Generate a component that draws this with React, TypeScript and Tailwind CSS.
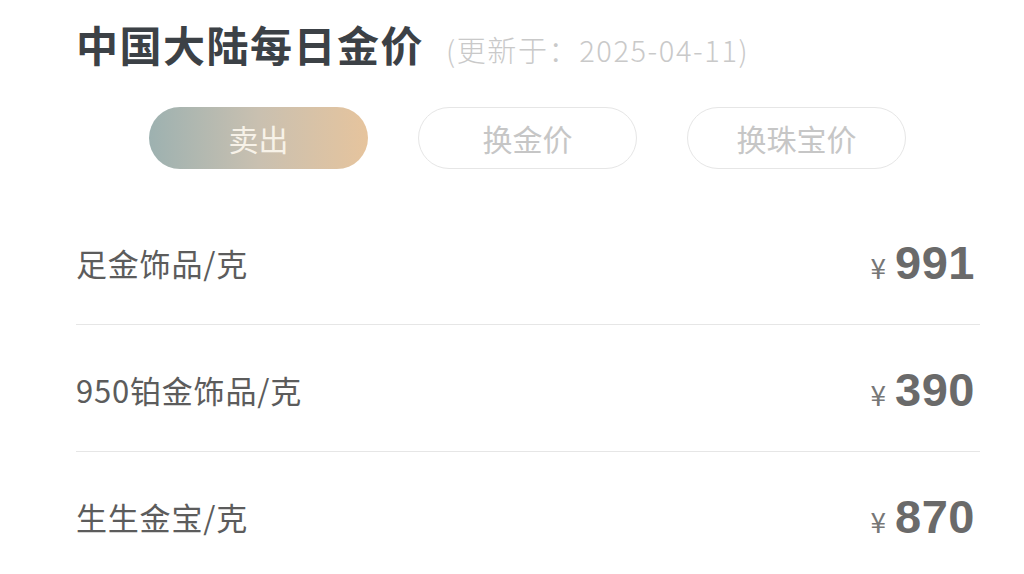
import { useState } from 'react';

const tabs = ['卖出', '换金价', '换珠宝价'];

const prices = [
  { name: '足金饰品/克', price: 991 },
  { name: '950铂金饰品/克', price: 390 },
  { name: '生生金宝/克', price: 870 },
];

export default function App() {
  const [active, setActive] = useState(0);

  return (
    <div
      className="h-[574px] w-[1024px] overflow-hidden bg-white"
      style={{ fontFamily: '"Noto Sans CJK SC", "Noto Sans", sans-serif' }}
    >
      <div className="pl-[76px] pr-[44px]">
        {/* Header */}
        <div className="flex items-baseline pt-[16px]">
          <h1 className="text-[42px] font-bold leading-[56px] tracking-[1.5px] text-[#3c4146]">
            中国大陆每日金价
          </h1>
          <span className="ml-[22px] text-[29px] font-light tracking-[1.6px] text-[#c9c9c9]">
            (更新于：2025-04-11)
          </span>
        </div>

        {/* Tabs */}
        <div className="mt-[35px] flex gap-[50px] pl-[73px]">
          {tabs.map((t, i) => (
            <button
              key={t}
              onClick={() => setActive(i)}
              className={
                i === active
                  ? 'h-[62px] w-[219px] rounded-full bg-gradient-to-r from-[#9db1b0] via-[#c9c0b0] to-[#e6c49d] text-[30px] text-[#f7f2e8]'
                  : 'h-[62px] w-[219px] rounded-full border-[1.5px] border-[#e6e6e6] bg-white text-[30px] text-[#c6c6c6]'
              }
            >
              {t}
            </button>
          ))}
        </div>

        {/* Price list */}
        <div className="mt-[29px]">
          {prices.map((p) => (
            <div
              key={p.name}
              className="flex h-[127px] items-center justify-between border-b border-[#e6e6e6] pt-[5px] pr-[5px]"
            >
              <span className="text-[31px] tracking-[0.8px] text-[#5c5c5c]">{p.name}</span>
              <span className="flex items-baseline">
                <span className="mr-[9px] text-[28px] text-[#777777]">¥</span>
                <span
                  className="text-[47px] font-bold tracking-[0.5px] text-[#6a6a6a]"
                  style={{ fontFamily: '"Liberation Sans", Arial, sans-serif' }}
                >
                  {p.price}
                </span>
              </span>
            </div>
          ))}
        </div>
      </div>
    </div>
  );
}
